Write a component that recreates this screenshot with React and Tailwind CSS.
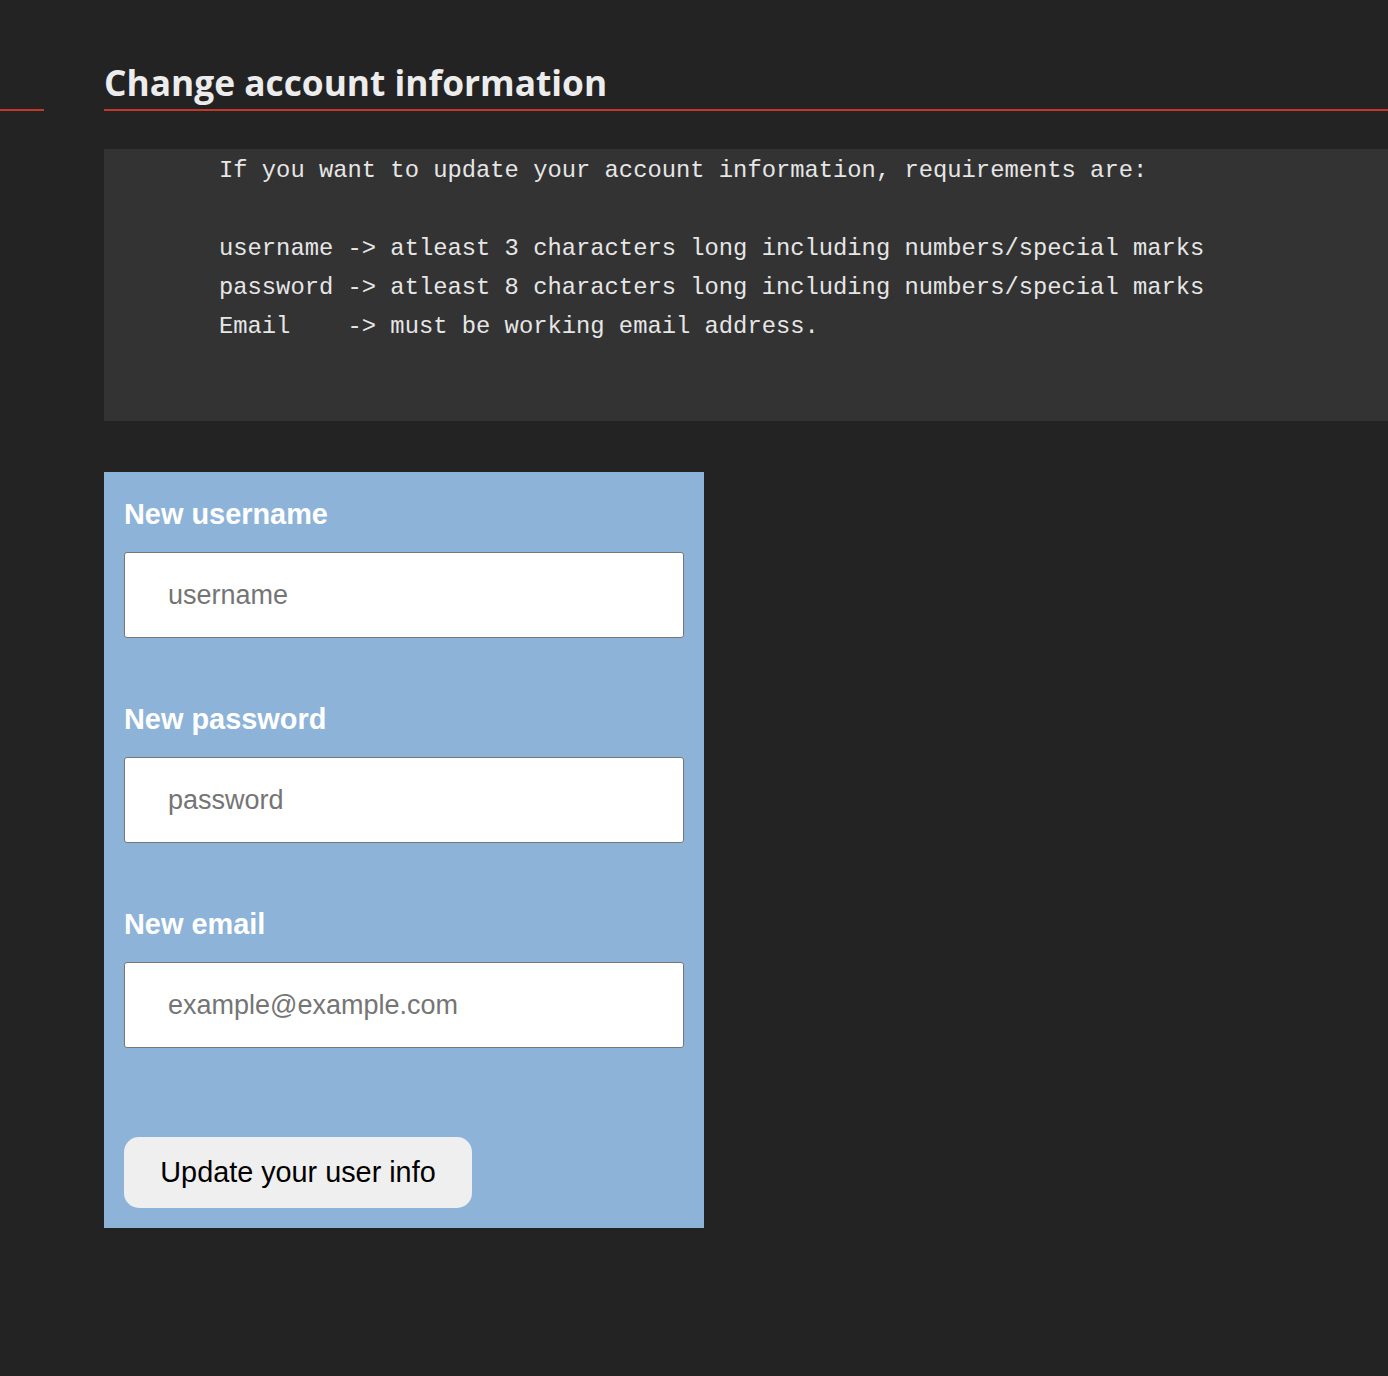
export default function App() {
  const pre = `If you want to update your account information, requirements are:

username -> atleast 3 characters long including numbers/special marks
password -> atleast 8 characters long including numbers/special marks
Email    -> must be working email address.`;
  const fields = [
    { label: "New username", ph: "username", type: "text" },
    { label: "New password", ph: "password", type: "password" },
    { label: "New email", ph: "example@example.com", type: "email" },
  ];
  return (
    <div className="min-h-[1376px] w-full bg-[#232323] pt-[55px]">
      <div className="flex items-end">
        <div className="w-[44px] border-b-2 border-[#c0392b]" />
        <div className="ml-[60px] flex-1 border-b-2 border-[#c0392b]">
          <h2
            className="text-[35.3px] font-bold leading-[54px] text-[#ececec]"
            style={{ fontFamily: '"Open Sans", "Noto Sans", sans-serif' }}
          >
            Change account information
          </h2>
        </div>
      </div>
      <div className="ml-[104px] mt-[38px] bg-[#333333] pb-[75px] pl-[115px] pt-[2px]">
        <pre
          className="m-0 text-[23.8px] leading-[39px] text-[#e6e6e6]"
          style={{ fontFamily: '"Liberation Mono", "DejaVu Sans Mono", monospace' }}
        >
          {pre}
        </pre>
      </div>
      <form
        className="ml-[104px] mt-[51px] flex w-[600px] flex-col bg-[#8eb3d9] px-[20px] pb-[20px] pt-[25px]"
        style={{ fontFamily: '"Liberation Sans", Arial, sans-serif' }}
        onSubmit={(e) => e.preventDefault()}
      >
        {fields.map((f, i) => (
          <div key={f.label} className={i === 0 ? "" : "mt-[64px]"}>
            <label className="block text-[28.9px] font-bold leading-[34px] text-white">
              {f.label}
            </label>
            <input
              type={f.type}
              placeholder={f.ph}
              className="mt-[21px] box-border h-[86px] w-[560px] rounded-[3px] border border-[#767676] bg-white pl-[43px] text-[27px] text-black placeholder:text-[#757575] outline-none"
            />
          </div>
        ))}
        <div className="mt-[89px]">
          <button
            type="submit"
            className="h-[71px] w-[348px] rounded-[15px] bg-[#efefef] text-[28.8px] text-black"
          >
            Update your user info
          </button>
        </div>
      </form>
    </div>
  );
}
